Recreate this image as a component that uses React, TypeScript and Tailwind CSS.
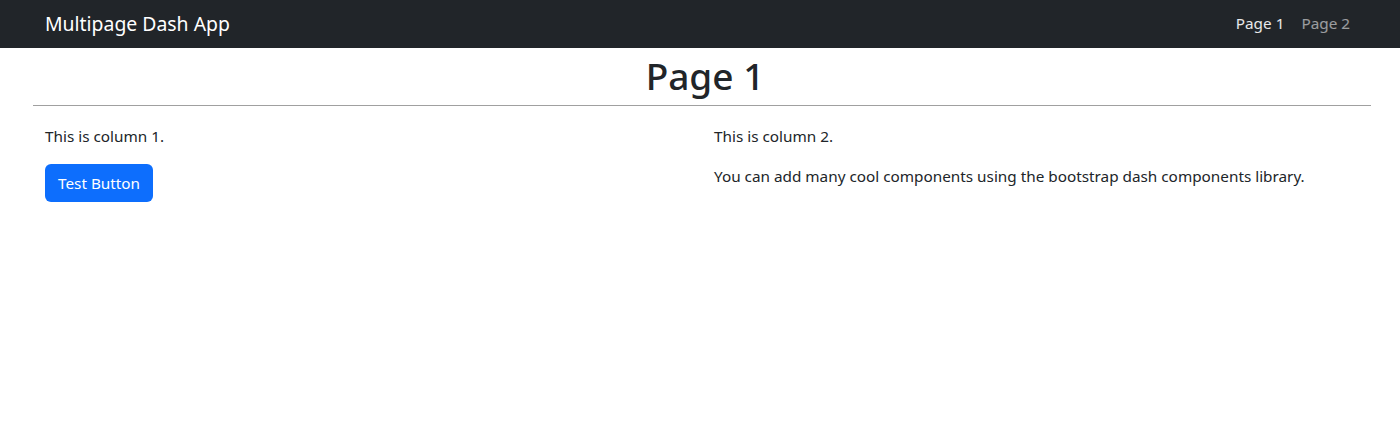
import React from "react";

const font = { fontFamily: '"Noto Sans", "Open Sans", Arial, sans-serif' };

const Navbar = () => (
  <nav className="h-12 bg-[#212529] flex items-center justify-between pl-[45px] pr-[50px]">
    <span className="text-[19.4px] text-white leading-none">Multipage Dash App</span>
    <div className="flex items-center gap-[17px] text-[15.3px] leading-none">
      <a className="text-white/90">Page 1</a>
      <a className="text-white/55">Page 2</a>
    </div>
  </nav>
);

export default function App() {
  return (
    <div className="min-h-[433px] bg-white text-[#212529]" style={font}>
      <Navbar />
      <main className="pl-[33px] pr-[29px]">
        <h1 className="text-[37px] font-medium leading-[48px] text-center mt-1 pl-[6px]">Page 1</h1>
        <hr className="mt-[5px] border-t border-[#a0a0a0]" />
        <div className="grid grid-cols-2 pt-[18px] text-[15.3px] leading-6">
          {/* Column 1 */}
          <div className="px-3">
            <p className="mb-4">This is column 1.</p>
            <button className="bg-[#0d6efd] text-white rounded-md h-[38px] px-[13px]">Test Button</button>
          </div>
          {/* Column 2 */}
          <div className="px-3">
            <p className="mb-4">This is column 2.</p>
            <p>You can add many cool components using the bootstrap dash components library.</p>
          </div>
        </div>
      </main>
    </div>
  );
}
